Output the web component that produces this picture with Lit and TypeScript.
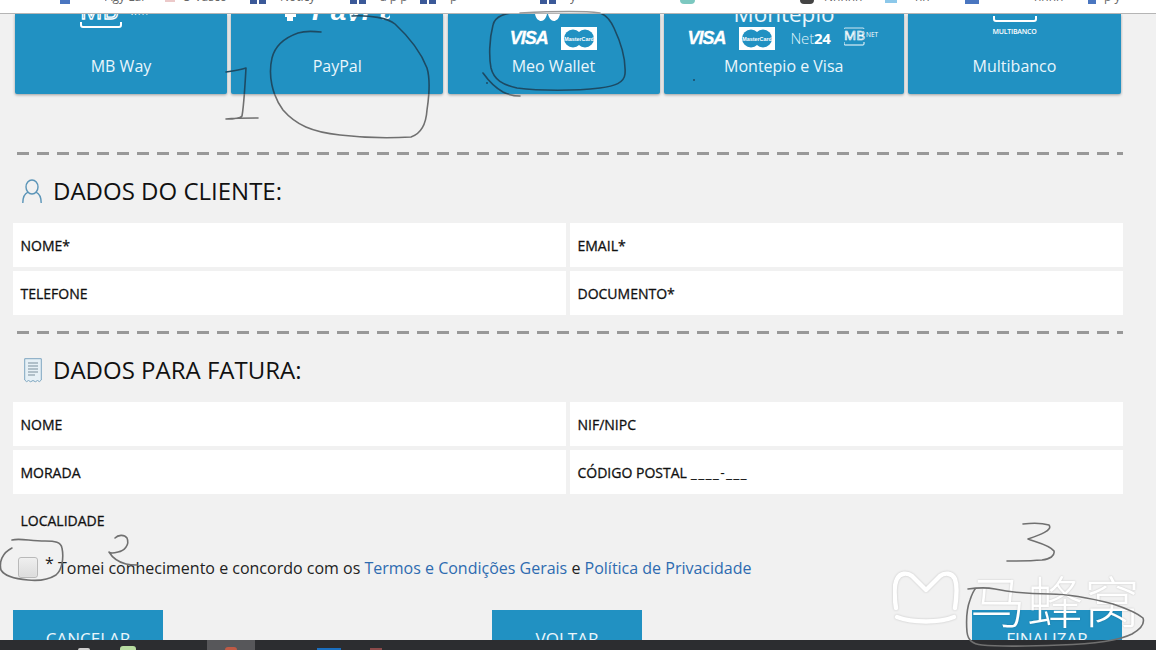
import { LitElement, html, css, svg } from "lit";
import { customElement } from "lit/decorators.js";

const topItems: { gap: number; w: number; kind: string; text?: string }[] = [
  { gap: 60, w: 10, kind: "fav-blue" },
  { gap: 35, w: 40, kind: "text", text: "Agy Lan" },
  { gap: 20, w: 10, kind: "fav-red" },
  { gap: 7, w: 50, kind: "text", text: "O Vasco" },
  { gap: 18, w: 16, kind: "fb" },
  { gap: 14, w: 60, kind: "text", text: "Noticy" },
  { gap: 10, w: 16, kind: "fb" },
  { gap: 14, w: 40, kind: "text", text: "a p p" },
  { gap: 0, w: 16, kind: "fb" },
  { gap: 14, w: 90, kind: "text", text: "p" },
  { gap: 0, w: 16, kind: "fb" },
  { gap: 14, w: 60, kind: "text", text: "y" },
  { gap: 50, w: 15, kind: "fav-teal" },
  { gap: 105, w: 14, kind: "fav-dark" },
  { gap: 10, w: 50, kind: "text", text: "Nnnnn" },
  { gap: 11, w: 12, kind: "fav-sky" },
  { gap: 18, w: 24, kind: "text", text: "nn" },
  { gap: 26, w: 14, kind: "fav-blue" },
  { gap: 55, w: 42, kind: "text", text: "nnnn" },
  { gap: 12, w: 8, kind: "fav-blue" },
  { gap: 8, w: 24, kind: "text", text: "p y" },
];

const taskItems: { gap: number; w: number; kind: string }[] = [
  { gap: 78, w: 12, kind: "t-white" },
  { gap: 30, w: 16, kind: "t-green" },
  { gap: 71, w: 48, kind: "t-tab" },
  { gap: 62, w: 24, kind: "t-blue" },
  { gap: 29, w: 12, kind: "t-red" },
];

const masterCard = () => html`<svg class="mc" viewBox="0 0 36 23" width="36" height="23">
  <rect width="36" height="23" fill="#fff"></rect>
  <circle cx="12" cy="11.5" r="9" fill="#2191c2"></circle>
  <circle cx="24" cy="11.5" r="9" fill="#2191c2"></circle>
  <text x="18" y="13.6" text-anchor="middle" class="mc-t">MasterCard</text>
</svg>`;

const visa = () => html`<span class="visa">VISA</span>`;

const bracket = (w: number, y: number) =>
  svg`<path d="M1 ${y} V${y + 3} Q1 ${y + 5} 3 ${y + 5} H${w - 3} Q${w - 1} ${y + 5} ${w - 1} ${y + 3} V${y}" fill="none" stroke="#fff" stroke-width="2"></path>`;

const loops = [
  "M226 72 C233 71 240 70 246 68 C245 85 244 105 242 116 C240 119 232 119 226 119 M226 119 C236 118 248 118 258 118",
  "M321 32 C312 31 304 31 298 33 C284 38 275 46 272 58 C268 75 272 95 283 110 C296 125 312 132 340 135 C365 138 395 138 411 137 C420 134 426 125 427 110 C430 90 430 78 427 68 C420 50 408 36 395 24 C388 18 370 15 352 16",
  "M600 13 C585 11 560 11 520 12 C505 13 495 16 493 25 C489 40 489 58 491 68 C494 80 503 85 517 88 C540 91 575 91 600 88 C615 86 624 83 625 74 C626 60 622 45 614 28 C610 19 606 15 600 13",
  "M483 73 C488 80 494 87 503 92 C509 95 514 96 520 96",
  "M12 540 C20 538 30 541 45 541 C55 541 61 542 62 548 C64 558 62 570 56 575 C48 580 38 581 28 580 C16 579 5 577 1 570 C-1 562 2 553 12 548",
  "M115 538 C118 535 124 534 127 538 C130 545 124 551 118 552 C114 553 110 553 109 552 C112 557 118 562 126 564 C130 565 134 565 137 565",
  "M1023 524 C1032 523 1042 523 1049 525 C1053 530 1040 535 1028 539 C1036 542 1050 545 1054 551 C1055 556 1050 559 1042 560 C1030 561 1018 561 1007 561",
  "M968 589 C975 588 985 587 995 589 C1010 592 1030 594 1050 594 C1070 594 1090 598 1113 604 C1125 608 1136 612 1143 618 C1145 624 1141 629 1132 634 C1120 640 1095 644 1060 645 C1035 646 1000 647 982 645 C972 644 968 640 967 632 C966 620 967 608 970 600 C972 594 974 590 976 588",
];

@customElement("app-root")
export class AppRoot extends LitElement {
  static styles = css`
    :host {
      display: block;
      width: 1156px;
      height: 650px;
      font-family: "Open Sans", "Liberation Sans", sans-serif;
      color: #111;
    }
    * { box-sizing: border-box; }
    .page {
      position: relative;
      width: 1156px;
      height: 650px;
      overflow: hidden;
      display: flex;
      flex-direction: column;
      background: #f1f1f1;
    }
    .topbar {
      flex: none;
      height: 14px;
      background: #fff;
      border-bottom: 1px solid #b5b5b5;
      overflow: hidden;
      display: flex;
      align-items: flex-start;
    }
    .top-item { flex: none; height: 4px; overflow: hidden; }
    .top-text {
      font-size: 12px;
      line-height: 14px;
      margin-top: -10px;
      height: 15px;
      color: #666;
      white-space: nowrap;
    }
    .fb { background: linear-gradient(90deg, #3b5998 0 44%, #fff 44% 56%, #3b5998 56%); }
    .fav-blue { background: #4a76c0; }
    .fav-red { background: #ecc9c9; height: 2px; }
    .fav-teal { background: #7cc8c0; height: 4px; border-radius: 0 0 4px 4px; }
    .fav-dark { background: #444; border-radius: 0 0 7px 7px; height: 4px; }
    .fav-sky { background: #8cc8ea; height: 3px; }
    .main {
      flex: 1;
      min-height: 0;
      overflow: hidden;
      padding-left: 13px;
      width: 1123px;
    }
    .cards {
      display: grid;
      grid-template-columns: 212px 212px 212px 240px 213px;
      column-gap: 4.25px;
      margin-left: 2px;
    }
    .card {
      height: 80px;
      background: #2191c2;
      border-radius: 0 0 2px 2px;
      box-shadow: 0 1px 3px rgba(0, 0, 0, 0.35);
      color: #e9f6fc;
      display: flex;
      flex-direction: column;
      align-items: center;
      justify-content: flex-end;
      padding-bottom: 17px;
      overflow: hidden;
    }
    .label { font-size: 16px; line-height: 22px; flex: none; }
    .logo { flex: none; display: block; }
    .logo-mb { margin: 0 4px 27px 0; }
    .logo-pp { margin-bottom: 34px; }
    .logo-mul { margin-bottom: 20px; display: flex; flex-direction: column; align-items: center; }
    .mul-text {
      font-size: 7px;
      line-height: 7px;
      color: #fff;
      margin-top: 5px;
      letter-spacing: -0.2px;
      font-weight: 600;
    }
    .hearts { margin: 0 12px 6px 0; }
    .monte { margin-bottom: 0; overflow: visible; }
    .monte-t { font-size: 22.5px; fill: #e9f6fc; font-family: "Open Sans", sans-serif; }
    .row {
      display: flex;
      align-items: center;
      gap: 15.5px;
      height: 23px;
      margin-bottom: 5px;
      flex: none;
    }
    .visa {
      font: italic 700 18px/23px "Liberation Sans", sans-serif;
      color: #fff;
      width: 36px;
      letter-spacing: -1px;
      text-align: center;
      white-space: nowrap;
      -webkit-text-stroke: 0.3px #fff;
    }
    .mc { display: block; }
    .mc-t {
      font: 700 5.4px "Liberation Sans", sans-serif;
      fill: #fff;
    }
    .net {
      font-size: 15px;
      color: #dff1f9;
      font-weight: 300;
      line-height: 23px;
      width: 38px;
      white-space: nowrap;
      letter-spacing: -0.2px;
    }
    .net b { font-weight: 700; color: #fff; }
    .mbnet { display: block; }
    .t-mb { font: 400 13.5px "Open Sans", sans-serif; fill: none; stroke: #fff; stroke-width: 0.7; }
    .t-net { font: 400 6.5px "Open Sans", sans-serif; fill: #fff; }
    .t-bigmb { font: 400 25px "Open Sans", sans-serif; fill: none; stroke: #fff; stroke-width: 1.3; }
    .t-way { font: 400 8px "Open Sans", sans-serif; fill: #fff; letter-spacing: 1px; }
    .t-pp { font: italic 700 28px "Liberation Sans", sans-serif; fill: #fff; }
    .dash {
      height: 3px;
      margin-left: 4px;
      background: repeating-linear-gradient(90deg, #999 0 12px, transparent 12px 20px);
    }
    .dash-a { margin-top: 58px; }
    .dash-b { margin-top: 16px; }
    .heading {
      height: 68px;
      padding: 4px 0 0 9px;
      display: flex;
      align-items: center;
      font-size: 24px;
      font-weight: 400;
      color: #111;
      margin: 0;
    }
    .h-icon { flex: none; display: block; margin-right: 11px; }
    .h-text { line-height: 30px; }
    .fields {
      display: grid;
      grid-template-columns: 1fr 1fr;
      gap: 4px;
    }
    .field {
      height: 44px;
      background: #fff;
      padding-left: 7.5px;
      display: flex;
      align-items: center;
      font-size: 14px;
      font-weight: 400;
      -webkit-text-stroke: 0.3px #111;
      color: #111;
    }
    .field.plain { background: transparent; grid-column: 1 / 2; }
    .mask { margin-left: 4px; letter-spacing: 1.2px; -webkit-text-stroke: 0; }
    .terms {
      height: 51px;
      display: flex;
      align-items: center;
      padding-left: 5px;
      font-size: 16px;
      color: #222;
      white-space: nowrap;
    }
    .check {
      flex: none;
      width: 20px;
      height: 21px;
      border: 1px solid #b9b9b9;
      border-radius: 3px;
      background: linear-gradient(#efefef, #dcdcdc);
      box-shadow: inset 0 0 1px #fff;
    }
    .star { margin: -9px 0 0 7px; width: 13px; flex: none; font-size: 16px; line-height: 16px; }
    .terms a { color: #2e6bb0; text-decoration: none; }
    .terms .sp { white-space: pre; }
    .actions {
      margin-top: 17px;
      display: flex;
      justify-content: space-between;
      width: 1109px;
    }
    .btn {
      width: 150px;
      height: 56px;
      background: #2191c2;
      color: #eaf6fb;
      font-size: 17px;
      display: flex;
      align-items: center;
      justify-content: center;
      flex: none;
      border: 0;
      padding: 0;
      font-family: inherit;
    }
    .btn.mid { margin-left: -1px; }
    .taskbar {
      flex: none;
      height: 10px;
      background: #2c2d30;
      display: flex;
      align-items: stretch;
      overflow: hidden;
      position: relative;
    }
    .t-white { background: #cfcfcf; height: 2px; margin-top: 8px; border-radius: 5px 5px 0 0; }
    .t-green { background: #b7dca0; height: 4px; margin-top: 6px; border-radius: 3px 3px 0 0; }
    .t-tab { background: #57575a; display: flex; justify-content: center; align-items: flex-end; }
    .t-tab i { width: 12px; height: 3px; background: #c05a45; border-radius: 6px 6px 0 0; }
    .t-blue { background: #1a6fc0; height: 6px; margin-top: 8px; }
    .t-red { background: #8c4a4a; height: 3px; margin-top: 8px; }
    .overlay {
      position: absolute;
      left: 0;
      top: 0;
      width: 1156px;
      height: 650px;
      pointer-events: none;
    }
    .ink { fill: none; stroke-width: 1.6; stroke-linecap: round; stroke-linejoin: round; }
    .wm {
      position: absolute;
      left: 893px;
      top: 566px;
      display: flex;
      align-items: center;
      gap: 11px;
      color: #fff;
      pointer-events: none;
    }
    .wm-logo { display: block; flex: none; filter: drop-shadow(0 0 1px rgba(0, 0, 0, 0.18)); }
    .wm-text {
      font-family: "Noto Sans CJK SC", sans-serif;
      font-weight: 300;
      font-size: 56px;
      line-height: 66px;
      letter-spacing: 1px;
      white-space: nowrap;
      text-shadow: 0 0 2px rgba(0, 0, 0, 0.2);
    }
  `;

  private card(label: string, logo: unknown) {
    return html`<div class="card">${logo}<div class="label">${label}</div></div>`;
  }

  private field(text: unknown) {
    return html`<div class="field">${text}</div>`;
  }

  render() {
    return html`<div class="page">
      <div class="topbar">
        ${topItems.map((t) =>
          t.kind === "text"
            ? html`<div class="top-item top-text" style="margin-left:${t.gap}px;width:${t.w}px">${t.text}</div>`
            : html`<div class="top-item ${t.kind}" style="margin-left:${t.gap}px;width:${t.w}px"></div>`
        )}
      </div>

      <div class="main">
        <div class="cards">
          ${this.card(
            "MB Way",
            html`<svg class="logo logo-mb" viewBox="0 0 78 14" width="78" height="14">
              <text x="0" y="5" class="t-bigmb">MB</text>
              <text x="50" y="1" class="t-way">WAY</text>
              ${bracket(42, 8)}
            </svg>`
          )}
          ${this.card(
            "PayPal",
            html`<svg class="logo logo-pp" viewBox="0 0 105 7" width="105" height="7">
              <rect x="0" y="0" width="11" height="3" fill="#fff"></rect>
              <rect x="2" y="3" width="6" height="4" fill="#fff"></rect>
              <text x="27" y="6" class="t-pp">PayPal</text>
            </svg>`
          )}
          ${this.card(
            "Meo Wallet",
            html`<svg class="logo hearts" viewBox="0 0 25 7" width="25" height="7">
                <path d="M0 0 C1 5 4 7 6 7 C9 7 11 4 12 0 Z M13 0 C14 4 16 7 19 7 C21 7 24 5 25 0 Z" fill="#fff"></path>
              </svg>
              <div class="row">${visa()}${masterCard()}</div>`
          )}
          ${this.card(
            "Montepio e Visa",
            html`<svg class="logo monte" viewBox="0 0 120 13" width="120" height="13">
                <text x="60" y="8" text-anchor="middle" class="monte-t">Montepio</text>
              </svg>
              <div class="row">
                ${visa()}${masterCard()}
                <span class="net">Net<b>24</b></span>
                <svg class="mbnet" viewBox="0 0 36 23" width="36" height="23">
                  <text x="0" y="13" class="t-mb">MB</text>
                  <text x="22" y="10" class="t-net">NET</text>
                  <path d="M0 15 V17 Q0 18 1 18 H19 Q20 18 20 17 V15" fill="none" stroke="#fff" stroke-width="1"></path>
                  <path d="M0 2 Q0 1 1 1 H19 Q20 1 20 2" fill="none" stroke="#fff" stroke-width="0.8"></path>
                </svg>
              </div>`
          )}
          ${this.card(
            "Multibanco",
            html`<div class="logo logo-mul">
              <svg viewBox="0 0 44 10" width="44" height="10" style="display:block">${bracket(44, 3)}</svg>
              <div class="mul-text">MULTIBANCO</div>
            </div>`
          )}
        </div>

        <div class="dash dash-a"></div>
        <h2 class="heading">
          <svg class="h-icon" width="20" height="24" viewBox="0 0 20 24" fill="none" stroke="#5b95b8" stroke-width="1.4">
            <ellipse cx="10" cy="8" rx="6" ry="7"></ellipse>
            <path d="M0.8 24 C0.8 18 3 14.5 6 13.2 M19.2 24 C19.2 18 17 14.5 14 13.2" stroke-linecap="round"></path>
          </svg>
          <span class="h-text">DADOS DO CLIENTE:</span>
        </h2>
        <div class="fields">
          ${this.field("NOME*")}${this.field("EMAIL*")}${this.field("TELEFONE")}${this.field("DOCUMENTO*")}
        </div>

        <div class="dash dash-b"></div>
        <h2 class="heading">
          <svg class="h-icon" style="margin-left:2px;margin-right:11px" width="18" height="25" viewBox="0 0 18 25">
            <path d="M0.7 0.7 H17.3 V22 Q15.5 25 13.5 22.5 Q11.5 25 9 22.5 Q6.5 25 4.5 22.5 Q2.5 25 0.7 22 Z" fill="#e6f0f6" stroke="#7ea6c0" stroke-width="1"></path>
            <path d="M4 5 H14 M4 8 H14 M4 11 H14 M4 14 H14 M4 17 H11" stroke="#7b8f9c" stroke-width="1"></path>
          </svg>
          <span class="h-text">DADOS PARA FATURA:</span>
        </h2>
        <div class="fields">
          ${this.field("NOME")}${this.field("NIF/NIPC")}${this.field("MORADA")}
          ${this.field(html`CÓDIGO POSTAL<span class="mask">____-___</span>`)}
          <div class="field plain">LOCALIDADE</div>
        </div>

        <div class="terms">
          <span class="check"></span>
          <span class="star">*</span>
          <span class="sp">Tomei conhecimento e concordo com os </span>
          <a href="#">Termos e Condições Gerais</a>
          <span class="sp"> e </span>
          <a href="#">Política de Privacidade</a>
        </div>

        <div class="actions">
          <button class="btn">CANCELAR</button>
          <button class="btn mid">VOLTAR</button>
          <button class="btn">FINALIZAR</button>
        </div>
      </div>

      <div class="taskbar">
        ${taskItems.map((t) =>
          t.kind === "t-tab"
            ? html`<div class="t-tab" style="margin-left:${t.gap}px;width:${t.w}px"><i></i></div>`
            : html`<div class="${t.kind}" style="margin-left:${t.gap}px;width:${t.w}px"></div>`
        )}
      </div>

      <div class="wm">
        <svg class="wm-logo" width="66" height="58" viewBox="0 0 66 58" fill="none" stroke="currentColor" stroke-width="4.4" stroke-linecap="round" stroke-linejoin="round">
          <path d="M3 38 C1 25 1 15 4 9 C7 3 14 2 19 6 L33 20 L47 6 C52 2 59 3 62 9 C64 15 64 25 62 38"></path>
          <path d="M4 47 C20 53 46 53 61 47"></path>
        </svg>
        <span class="wm-text">马蜂窝</span>
      </div>

      <svg class="overlay" viewBox="0 0 1156 650">
        <defs>
          <clipPath id="on-card"><rect x="0" y="14" width="1156" height="80"></rect></clipPath>
          <clipPath id="off-card"><rect x="0" y="94" width="1156" height="556"></rect></clipPath>
        </defs>
        <g clip-path="url(#on-card)">
          ${loops.map((d) => svg`<path class="ink" d=${d} stroke="#1d4a63"></path>`)}
          <circle cx="487" cy="83" r="1" fill="#1d4a63"></circle>
          <circle cx="694" cy="80" r="1" fill="#1d4a63"></circle>
        </g>
        <g clip-path="url(#off-card)">
          ${loops.map((d) => svg`<path class="ink" d=${d} stroke="#707070"></path>`)}
        </g>
        <path d="M520 13 C560 11 585 11 600 13" class="ink" stroke="#999"></path>
      </svg>
    </div>`;
  }
}
